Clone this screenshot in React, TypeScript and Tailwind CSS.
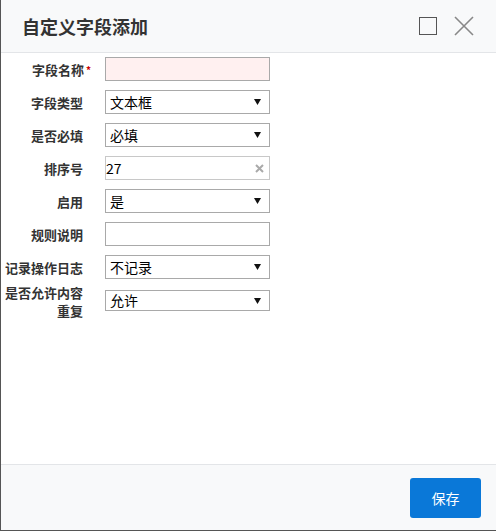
import type { FC, ReactNode } from 'react'

const FONT = { fontFamily: '"Microsoft YaHei", "Noto Sans CJK SC", "Liberation Sans", sans-serif' }

const Row: FC<{ label: ReactNode; children: ReactNode; required?: boolean }> = ({ label, children, required }) => (
  <div className="flex items-center h-[24px]">
    <div className="w-[82px] shrink-0 text-right text-[13px] font-bold text-[#333] leading-[17px]">
      {label}
      {required && <span className="text-[#c00] text-[10px] ml-[2px] -mr-[8px] align-top">*</span>}
    </div>
    <div className="ml-[22px] w-[165px] h-[24px]">{children}</div>
  </div>
)

const Select: FC<{ value: string }> = ({ value }) => (
  <div className="h-full border border-[#a9a9a9] bg-white flex items-center pl-[4px] pr-[8px] text-[14px] text-black">
    <span className="flex-1">{value}</span>
    <svg width="7" height="6" viewBox="0 0 7 6">
      <path d="M0 0 H7 L3.5 6 Z" fill="#111" />
    </svg>
  </div>
)

export default function App() {
  return (
    <div style={FONT} className="w-[496px] h-[531px] flex flex-col border-l border-b border-[#555] bg-white">
      {/* Header */}
      <div className="h-[53px] shrink-0 flex items-center bg-[#f8f9fa] border-b border-[#e3e5e8] pl-[21px] pr-[22px]">
        <div className="flex-1 text-[18px] font-bold text-[#333]">自定义字段添加</div>
        <div className="w-[18px] h-[18px] border-[1.5px] border-[#555] mr-[17px]" />
        <svg width="20" height="20" viewBox="0 0 20 20">
          <path d="M1 1 L19 19 M19 1 L1 19" stroke="#888" strokeWidth="1.6" fill="none" />
        </svg>
      </div>

      {/* Body */}
      <div className="flex-1 flex flex-col gap-[9px] pt-[4px]">
        <Row label="字段名称" required>
          <div className="h-full border border-[#a9a9a9] bg-[#fff0f0]" />
        </Row>
        <Row label="字段类型">
          <Select value="文本框" />
        </Row>
        <Row label="是否必填">
          <Select value="必填" />
        </Row>
        <Row label="排序号">
          <div className="h-full border border-[#c8c8c8] bg-white flex items-center text-[14px] text-black pr-[5px]">
            <span className="flex-1">27</span>
            <svg width="9" height="9" viewBox="0 0 9 9">
              <path d="M1 1 L8 8 M8 1 L1 8" stroke="#aaa" strokeWidth="2" fill="none" />
            </svg>
          </div>
        </Row>
        <Row label="启用">
          <Select value="是" />
        </Row>
        <Row label="规则说明">
          <div className="h-full border border-[#a9a9a9] bg-white" />
        </Row>
        <Row label="记录操作日志">
          <Select value="不记录" />
        </Row>
        <div className="flex items-start">
          <div className="w-[82px] shrink-0 -mt-[4px] text-right text-[13px] font-bold text-[#333] leading-[18px]">
            <div>是否允许内容</div>
            <div>重复</div>
          </div>
          <div className="ml-[22px] mt-[2px] w-[165px] h-[21px]">
            <Select value="允许" />
          </div>
        </div>
      </div>

      {/* Footer */}
      <div className="h-[66px] shrink-0 border-t border-[#e3e5e8] bg-[#f8f9fa] flex justify-end pt-[13px] pr-[15px]">
        <button
          type="button"
          className="w-[71px] h-[40px] rounded-[3px] bg-[#0a78d8] text-white text-[14px]"
        >
          保存
        </button>
      </div>
    </div>
  )
}
